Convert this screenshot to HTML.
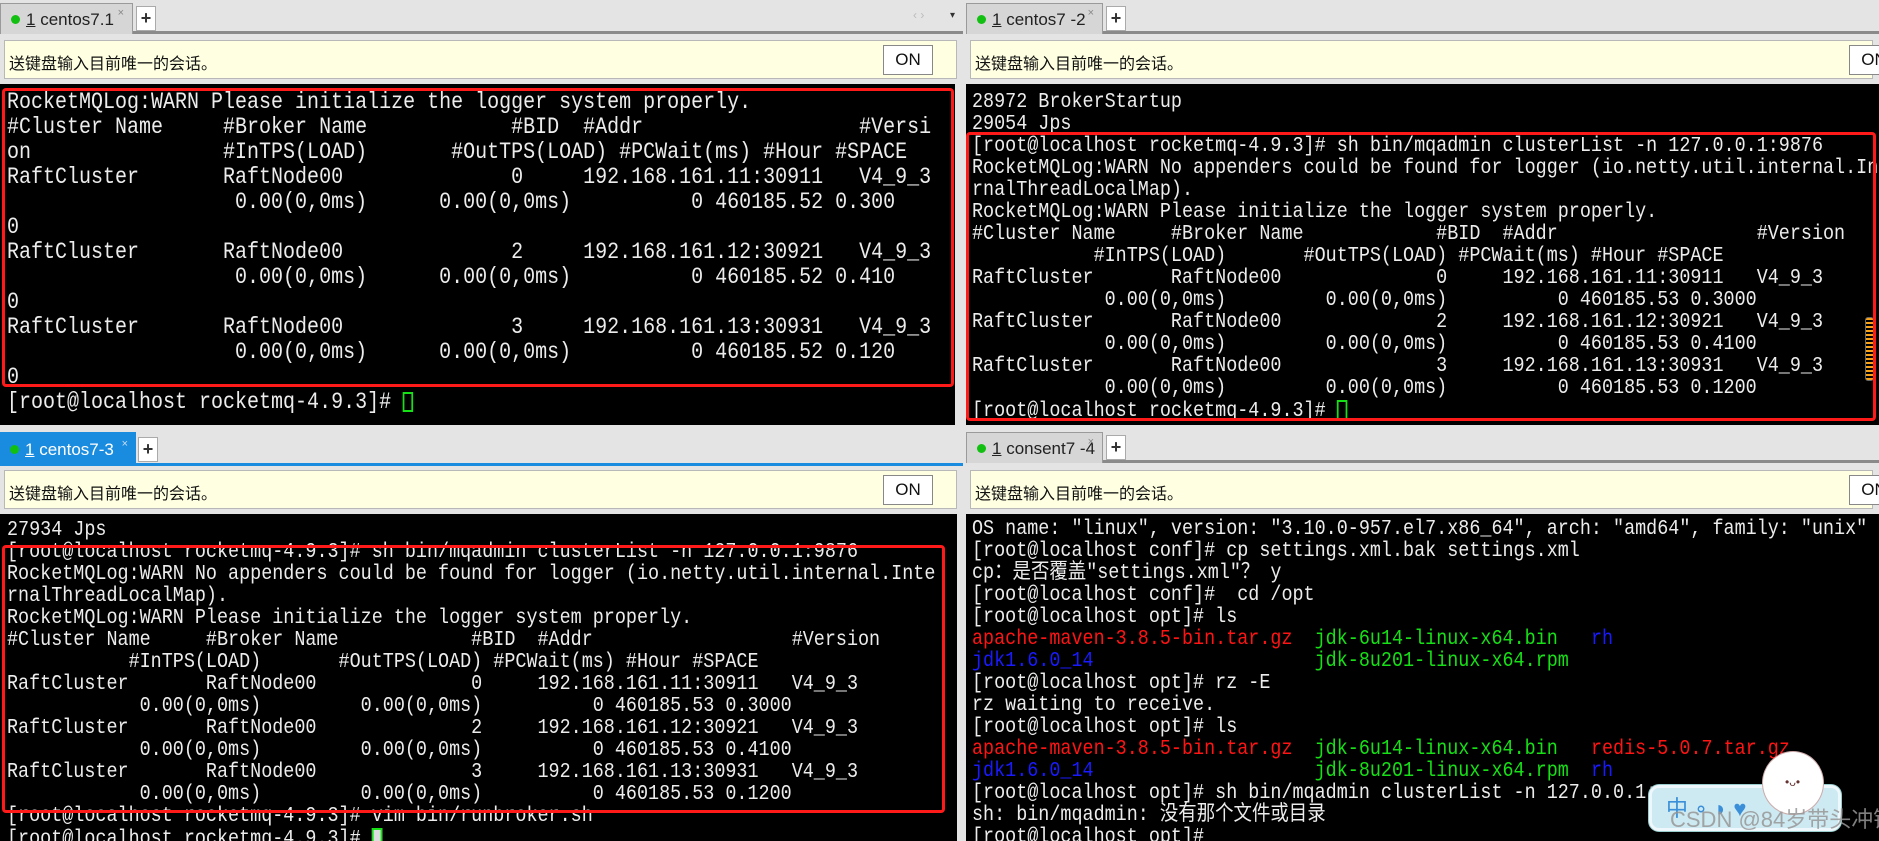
<!DOCTYPE html>
<html><head><meta charset="utf-8">
<style>
*{margin:0;padding:0;box-sizing:border-box}
body{width:1879px;height:841px;overflow:hidden;background:#e4e4e4;position:relative;font-family:"Liberation Sans","Noto Sans CJK SC",sans-serif}
.pane{position:absolute;background:#e4e4e4;overflow:hidden}
.tabbar{position:absolute;left:0;top:0;right:0;height:34px;background:#e4e4e4;border-bottom:3px solid #8a8a8a}
.tab{position:absolute;left:0;top:3px;height:31px;width:133px;background:#d6d6d6;border:1px solid #9a9a9a;border-bottom:none;font-size:17px;color:#222;padding:6px 0 0 10px;white-space:nowrap}
.tab .dot{display:inline-block;width:9px;height:9px;border-radius:50%;background:#11c011;margin-right:6px;vertical-align:1px}
.tab u{text-decoration:underline}
.tab .x{position:absolute;right:8px;top:3px;font-size:11px;color:#888}
.plus{position:absolute;left:136px;top:6px;width:20px;height:25px;background:#fff;border:1px solid #aaa;font-size:18px;font-weight:bold;text-align:center;line-height:22px;color:#333}
.yel{position:absolute;left:4px;top:40px;right:6px;height:39px;background:#ffffe1;border:1px solid #b8b8b8;font-size:16px;color:#111;padding:9px 0 0 4px;white-space:nowrap}
.on{position:absolute;top:4px;width:50px;height:30px;background:#fff;border:1px solid #888;font-size:17px;text-align:center;line-height:28px;color:#111}
.term{position:absolute;left:0;top:84px;right:0;bottom:0;background:#000;overflow:hidden}
pre{position:absolute;font-family:"Liberation Mono","Noto Sans CJK SC",monospace;color:#ececec;white-space:pre;transform-origin:0 0}
.s{font-size:21px;line-height:22px;transform:scaleX(0.877)}
.b{font-size:23px;line-height:25px;transform:scaleX(0.8696)}
.r{color:#ff1414}.g{color:#16e016}.bl{color:#1a1aff}
.cur{display:inline-block;width:12px;height:20px;border:2px solid #16e016;vertical-align:-4px}
.box{position:absolute;border:3px solid #ff1a1a;border-radius:4px}
</style></head><body>

<!-- top-left -->
<div class="pane" style="left:0;top:0;width:963px;height:425px">
 <div class="tabbar"></div>
 <div class="tab"><span class="dot"></span><u>1</u> centos7.1<span class="x">×</span></div>
 <div class="plus">+</div>
 <div style="position:absolute;left:913px;top:8px;font-size:12px;color:#bbb">‹ ›</div>
 <div style="position:absolute;left:950px;top:10px;font-size:10px;color:#333">▾</div>
 <div class="yel">送键盘输入目前唯一的会话。<div class="on" style="left:878px">ON</div></div>
 <div class="term" style="right:8px">
<pre class="b" style="left:7px;top:6px">RocketMQLog:WARN Please initialize the logger system properly.
#Cluster Name     #Broker Name            #BID  #Addr                  #Versi
on                #InTPS(LOAD)       #OutTPS(LOAD) #PCWait(ms) #Hour #SPACE
RaftCluster       RaftNode00              0     192.168.161.11:30911   V4_9_3
                   0.00(0,0ms)      0.00(0,0ms)          0 460185.52 0.300
0
RaftCluster       RaftNode00              2     192.168.161.12:30921   V4_9_3
                   0.00(0,0ms)      0.00(0,0ms)          0 460185.52 0.410
0
RaftCluster       RaftNode00              3     192.168.161.13:30931   V4_9_3
                   0.00(0,0ms)      0.00(0,0ms)          0 460185.52 0.120
0
[root@localhost rocketmq-4.9.3]# <span class="cur"></span></pre>
 </div>
 <div class="box" style="left:2px;top:88px;width:952px;height:299px"></div>
</div>

<!-- top-right -->
<div class="pane" style="left:966px;top:0;width:913px;height:425px">
 <div class="tabbar"></div>
 <div class="tab" style="width:137px"><span class="dot"></span><u>1</u> centos7 -2<span class="x">×</span></div>
 <div class="plus" style="left:140px">+</div>
 <div class="yel">送键盘输入目前唯一的会话。<div class="on" style="left:878px">ON</div></div>
 <div class="term">
<pre class="s" style="left:6px;top:8px">28972 BrokerStartup
29054 Jps
[root@localhost rocketmq-4.9.3]# sh bin/mqadmin clusterList -n 127.0.0.1:9876
RocketMQLog:WARN No appenders could be found for logger (io.netty.util.internal.In
rnalThreadLocalMap).
RocketMQLog:WARN Please initialize the logger system properly.
#Cluster Name     #Broker Name            #BID  #Addr                  #Version
           #InTPS(LOAD)       #OutTPS(LOAD) #PCWait(ms) #Hour #SPACE
RaftCluster       RaftNode00              0     192.168.161.11:30911   V4_9_3
            0.00(0,0ms)         0.00(0,0ms)          0 460185.53 0.3000
RaftCluster       RaftNode00              2     192.168.161.12:30921   V4_9_3
            0.00(0,0ms)         0.00(0,0ms)          0 460185.53 0.4100
RaftCluster       RaftNode00              3     192.168.161.13:30931   V4_9_3
            0.00(0,0ms)         0.00(0,0ms)          0 460185.53 0.1200
[root@localhost rocketmq-4.9.3]# <span class="cur"></span></pre>
  <div style="position:absolute;left:899px;top:233px;width:9px;height:64px;border:1px solid #666;border-radius:3px;background:repeating-linear-gradient(#f7a21b 0 2px,#000 2px 4px)"></div>
 </div>
 <div class="box" style="left:0;top:132px;width:910px;height:289px"></div>
</div>

<!-- bottom-left -->
<div class="pane" style="left:0;top:432px;width:963px;height:409px">
 <div class="tabbar" style="height:34px;border-bottom:3px solid #1a8ce0"></div>
 <div class="tab" style="top:0;height:34px;width:136px;background:#1a8ce0;border:none;color:#fff;padding-top:8px"><span class="dot"></span><u>1</u> centos7-3<span class="x" style="color:#cde;top:6px">×</span></div>
 <div class="plus" style="left:138px;top:5px">+</div>
 <div class="yel" style="top:38px">送键盘输入目前唯一的会话。<div class="on" style="left:878px">ON</div></div>
 <div class="term" style="top:82px;right:6px">
<pre class="s" style="left:7px;top:6px">27934 Jps
[root@localhost rocketmq-4.9.3]# sh bin/mqadmin clusterList -n 127.0.0.1:9876
RocketMQLog:WARN No appenders could be found for logger (io.netty.util.internal.Inte
rnalThreadLocalMap).
RocketMQLog:WARN Please initialize the logger system properly.
#Cluster Name     #Broker Name            #BID  #Addr                  #Version
           #InTPS(LOAD)       #OutTPS(LOAD) #PCWait(ms) #Hour #SPACE
RaftCluster       RaftNode00              0     192.168.161.11:30911   V4_9_3
            0.00(0,0ms)         0.00(0,0ms)          0 460185.53 0.3000
RaftCluster       RaftNode00              2     192.168.161.12:30921   V4_9_3
            0.00(0,0ms)         0.00(0,0ms)          0 460185.53 0.4100
RaftCluster       RaftNode00              3     192.168.161.13:30931   V4_9_3
            0.00(0,0ms)         0.00(0,0ms)          0 460185.53 0.1200
[root@localhost rocketmq-4.9.3]# vim bin/runbroker.sh
[root@localhost rocketmq-4.9.3]# <span class="cur" style="background:#ddd"></span></pre>
 </div>
 <div class="box" style="left:2px;top:113px;width:943px;height:268px"></div>
</div>

<!-- bottom-right -->
<div class="pane" style="left:966px;top:425px;width:913px;height:416px">
 <div class="tabbar" style="height:38px"></div>
 <div class="tab" style="top:7px;width:137px"><span class="dot"></span><u>1</u> consent7 -4<span class="x">×</span></div>
 <div class="plus" style="left:140px;top:10px">+</div>
 <div class="yel" style="top:45px">送键盘输入目前唯一的会话。<div class="on" style="left:878px">ON</div></div>
 <div class="term" style="top:89px">
<pre class="s" style="left:6px;top:5px">OS name: "linux", version: "3.10.0-957.el7.x86_64", arch: "amd64", family: "unix"
[root@localhost conf]# cp settings.xml.bak settings.xml
cp：是否覆盖"settings.xml"？ y
[root@localhost conf]#  cd /opt
[root@localhost opt]# ls
<span class="r">apache-maven-3.8.5-bin.tar.gz</span>  <span class="g">jdk-6u14-linux-x64.bin</span>   <span class="bl">rh</span>
<span class="bl">jdk1.6.0_14</span>                    <span class="g">jdk-8u201-linux-x64.rpm</span>
[root@localhost opt]# rz -E
rz waiting to receive.
[root@localhost opt]# ls
<span class="r">apache-maven-3.8.5-bin.tar.gz</span>  <span class="g">jdk-6u14-linux-x64.bin</span>   <span class="r">redis-5.0.7.tar.gz</span>
<span class="bl">jdk1.6.0_14</span>                    <span class="g">jdk-8u201-linux-x64.rpm</span>  <span class="bl">rh</span>
[root@localhost opt]# sh bin/mqadmin clusterList -n 127.0.0.1:9876
sh: bin/mqadmin: 没有那个文件或目录
[root@localhost opt]# </pre>
 </div>
 <!-- watermark -->
 <div style="position:absolute;left:683px;top:360px;width:192px;height:46px;border-radius:10px;background:#cde9f2;border:3px solid #eef7fb;box-shadow:0 0 0 1px #9cc"></div>
 <div style="position:absolute;left:700px;top:366px;font-size:22px;color:#3a8fd8">中 ∘ ◗ ♥</div>
 <div style="position:absolute;left:796px;top:326px;width:62px;height:64px;border-radius:50%;background:#fff;border:1px solid #caa"></div>
 <div style="position:absolute;left:819px;top:350px;font-size:12px;color:#633">•ᴗ•</div>
 <div style="position:absolute;left:704px;top:377px;font-size:22px;color:rgba(150,150,150,0.85);white-space:nowrap">CSDN @84岁带头冲锋</div>
</div>
</body></html>
